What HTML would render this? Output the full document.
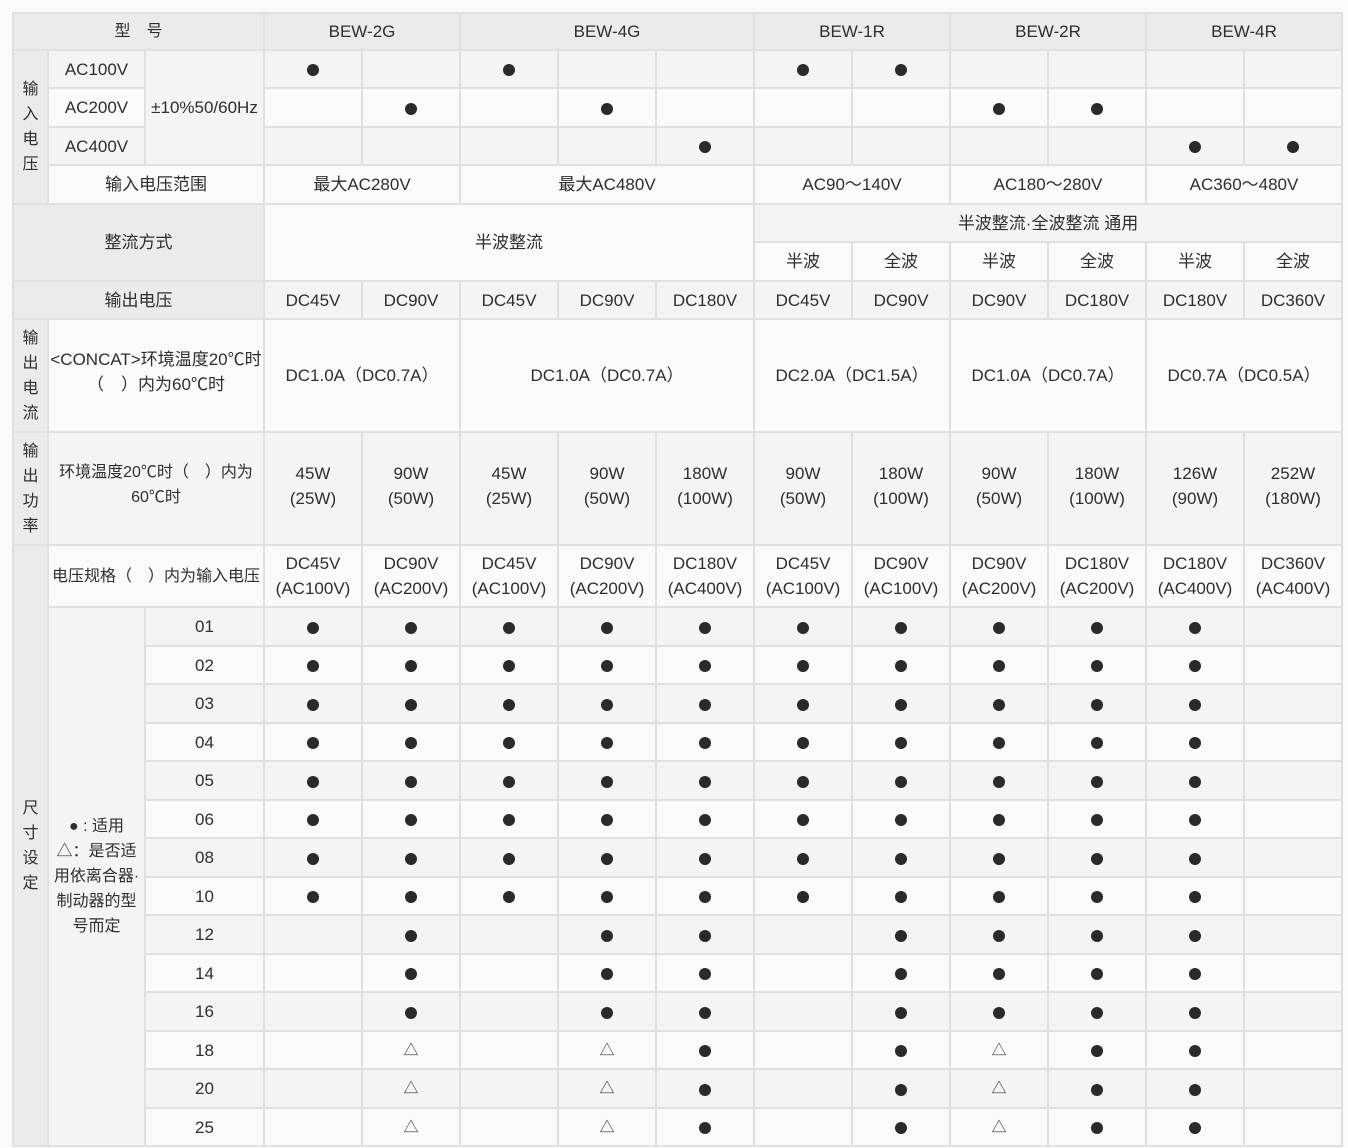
<!DOCTYPE html>
<html><head><meta charset="utf-8"><style>
html,body{margin:0;padding:0;background:#fafafa;}
body{width:1348px;height:1148px;overflow:hidden;position:relative;}
table{position:absolute;left:12px;top:12px;border-collapse:collapse;table-layout:fixed;width:1331px;
font-family:"Liberation Sans","Noto Sans CJK SC",sans-serif;font-size:17px;color:#2e2e2e;}
td{border:2px solid #e0e0e0;text-align:center;vertical-align:middle;padding:0;line-height:25px;overflow:hidden;white-space:nowrap;}
.h{background:#ebebeb;}
.g td{background:#f4f4f4;}
.g td.h,.w td.h{background:#ebebeb;}
.w td{background:#fafafa;}
.v{background:#ebebeb !important;line-height:25px;}
.d{display:inline-block;width:12px;height:12px;border-radius:50%;background:#2a2a2a;vertical-align:middle;}
.t{font-size:15px;}
.s{font-size:16px;}
.lab{background:#f4f4f4 !important;white-space:normal;font-size:16px;}
</style></head><body>
<table>
<colgroup><col style="width:35px"><col style="width:97px"><col style="width:119px">
<col style="width:98px"><col style="width:98px"><col style="width:98px"><col style="width:98px"><col style="width:98px"><col style="width:98px"><col style="width:98px"><col style="width:98px"><col style="width:98px"><col style="width:98px"><col style="width:98px"></colgroup>
<tr class="g" style="height:37px"><td class="h s" colspan="3">型　号</td><td class="h" colspan="2">BEW-2G</td><td class="h" colspan="3">BEW-4G</td><td class="h" colspan="2">BEW-1R</td><td class="h" colspan="2">BEW-2R</td><td class="h" colspan="2">BEW-4R</td></tr>
<tr class="g" style="height:38px"><td class="v s" rowspan="4">输<br>入<br>电<br>压</td><td>AC100V</td><td rowspan="3" style="background:#f4f4f4">±10%50/60Hz</td><td><span class="d"></span></td><td></td><td><span class="d"></span></td><td></td><td></td><td><span class="d"></span></td><td><span class="d"></span></td><td></td><td></td><td></td><td></td></tr>
<tr class="w" style="height:39px"><td>AC200V</td><td></td><td><span class="d"></span></td><td></td><td><span class="d"></span></td><td></td><td></td><td></td><td><span class="d"></span></td><td><span class="d"></span></td><td></td><td></td></tr>
<tr class="g" style="height:38px"><td>AC400V</td><td></td><td></td><td></td><td></td><td><span class="d"></span></td><td></td><td></td><td></td><td></td><td><span class="d"></span></td><td><span class="d"></span></td></tr>
<tr class="w" style="height:39px"><td colspan="2">输入电压范围</td><td colspan="2">最大AC280V</td><td colspan="3">最大AC480V</td><td colspan="2">AC90～140V</td><td colspan="2">AC180～280V</td><td colspan="2">AC360～480V</td></tr>
<tr class="g" style="height:38px"><td class="h" colspan="3" rowspan="2">整流方式</td><td colspan="5" rowspan="2" style="background:#fafafa">半波整流</td><td colspan="6">半波整流·全波整流 通用</td></tr>
<tr class="w" style="height:39px"><td>半波</td><td>全波</td><td>半波</td><td>全波</td><td>半波</td><td>全波</td></tr>
<tr class="g" style="height:38px"><td class="h" colspan="3">输出电压</td><td>DC45V</td><td>DC90V</td><td>DC45V</td><td>DC90V</td><td>DC180V</td><td>DC45V</td><td>DC90V</td><td>DC90V</td><td>DC180V</td><td>DC180V</td><td>DC360V</td></tr>
<tr class="w" style="height:113px"><td class="v s">输<br>出<br>电<br>流</td><td colspan="2" style="padding-bottom:8px">&lt;CONCAT&gt;环境温度20℃时<br>（　）内为60℃时</td><td colspan="2">DC1.0A（DC0.7A）</td><td colspan="3">DC1.0A（DC0.7A）</td><td colspan="2">DC2.0A（DC1.5A）</td><td colspan="2">DC1.0A（DC0.7A）</td><td colspan="2">DC0.7A（DC0.5A）</td></tr>
<tr class="g" style="height:113px"><td class="v s">输<br>出<br>功<br>率</td><td colspan="2" class="s" style="padding-bottom:8px">环境温度20℃时（　）内为<br>60℃时</td><td style="padding-bottom:6px">45W<br>(25W)</td><td style="padding-bottom:6px">90W<br>(50W)</td><td style="padding-bottom:6px">45W<br>(25W)</td><td style="padding-bottom:6px">90W<br>(50W)</td><td style="padding-bottom:6px">180W<br>(100W)</td><td style="padding-bottom:6px">90W<br>(50W)</td><td style="padding-bottom:6px">180W<br>(100W)</td><td style="padding-bottom:6px">90W<br>(50W)</td><td style="padding-bottom:6px">180W<br>(100W)</td><td style="padding-bottom:6px">126W<br>(90W)</td><td style="padding-bottom:6px">252W<br>(180W)</td></tr>
<tr class="w" style="height:62px"><td class="v s" rowspan="15">尺<br>寸<br>设<br>定</td><td colspan="2" class="s">电压规格（　）内为输入电压</td><td>DC45V<br>(AC100V)</td><td>DC90V<br>(AC200V)</td><td>DC45V<br>(AC100V)</td><td>DC90V<br>(AC200V)</td><td>DC180V<br>(AC400V)</td><td>DC45V<br>(AC100V)</td><td>DC90V<br>(AC100V)</td><td>DC90V<br>(AC200V)</td><td>DC180V<br>(AC200V)</td><td>DC180V<br>(AC400V)</td><td>DC360V<br>(AC400V)</td></tr>
<tr class="g" style="height:39px"><td class="lab" rowspan="14" style="padding-top:0px">● : 适用<br>△：是否适<br>用依离合器·<br>制动器的型<br>号而定</td><td>01</td><td><span class="d"></span></td><td><span class="d"></span></td><td><span class="d"></span></td><td><span class="d"></span></td><td><span class="d"></span></td><td><span class="d"></span></td><td><span class="d"></span></td><td><span class="d"></span></td><td><span class="d"></span></td><td><span class="d"></span></td><td></td></tr>
<tr class="w" style="height:38px"><td>02</td><td><span class="d"></span></td><td><span class="d"></span></td><td><span class="d"></span></td><td><span class="d"></span></td><td><span class="d"></span></td><td><span class="d"></span></td><td><span class="d"></span></td><td><span class="d"></span></td><td><span class="d"></span></td><td><span class="d"></span></td><td></td></tr>
<tr class="g" style="height:39px"><td>03</td><td><span class="d"></span></td><td><span class="d"></span></td><td><span class="d"></span></td><td><span class="d"></span></td><td><span class="d"></span></td><td><span class="d"></span></td><td><span class="d"></span></td><td><span class="d"></span></td><td><span class="d"></span></td><td><span class="d"></span></td><td></td></tr>
<tr class="w" style="height:38px"><td>04</td><td><span class="d"></span></td><td><span class="d"></span></td><td><span class="d"></span></td><td><span class="d"></span></td><td><span class="d"></span></td><td><span class="d"></span></td><td><span class="d"></span></td><td><span class="d"></span></td><td><span class="d"></span></td><td><span class="d"></span></td><td></td></tr>
<tr class="g" style="height:39px"><td>05</td><td><span class="d"></span></td><td><span class="d"></span></td><td><span class="d"></span></td><td><span class="d"></span></td><td><span class="d"></span></td><td><span class="d"></span></td><td><span class="d"></span></td><td><span class="d"></span></td><td><span class="d"></span></td><td><span class="d"></span></td><td></td></tr>
<tr class="w" style="height:38px"><td>06</td><td><span class="d"></span></td><td><span class="d"></span></td><td><span class="d"></span></td><td><span class="d"></span></td><td><span class="d"></span></td><td><span class="d"></span></td><td><span class="d"></span></td><td><span class="d"></span></td><td><span class="d"></span></td><td><span class="d"></span></td><td></td></tr>
<tr class="g" style="height:39px"><td>08</td><td><span class="d"></span></td><td><span class="d"></span></td><td><span class="d"></span></td><td><span class="d"></span></td><td><span class="d"></span></td><td><span class="d"></span></td><td><span class="d"></span></td><td><span class="d"></span></td><td><span class="d"></span></td><td><span class="d"></span></td><td></td></tr>
<tr class="w" style="height:38px"><td>10</td><td><span class="d"></span></td><td><span class="d"></span></td><td><span class="d"></span></td><td><span class="d"></span></td><td><span class="d"></span></td><td><span class="d"></span></td><td><span class="d"></span></td><td><span class="d"></span></td><td><span class="d"></span></td><td><span class="d"></span></td><td></td></tr>
<tr class="g" style="height:39px"><td>12</td><td></td><td><span class="d"></span></td><td></td><td><span class="d"></span></td><td><span class="d"></span></td><td></td><td><span class="d"></span></td><td><span class="d"></span></td><td><span class="d"></span></td><td><span class="d"></span></td><td></td></tr>
<tr class="w" style="height:38px"><td>14</td><td></td><td><span class="d"></span></td><td></td><td><span class="d"></span></td><td><span class="d"></span></td><td></td><td><span class="d"></span></td><td><span class="d"></span></td><td><span class="d"></span></td><td><span class="d"></span></td><td></td></tr>
<tr class="g" style="height:39px"><td>16</td><td></td><td><span class="d"></span></td><td></td><td><span class="d"></span></td><td><span class="d"></span></td><td></td><td><span class="d"></span></td><td><span class="d"></span></td><td><span class="d"></span></td><td><span class="d"></span></td><td></td></tr>
<tr class="w" style="height:38px"><td>18</td><td></td><td class="t">△</td><td></td><td class="t">△</td><td><span class="d"></span></td><td></td><td><span class="d"></span></td><td class="t">△</td><td><span class="d"></span></td><td><span class="d"></span></td><td></td></tr>
<tr class="g" style="height:39px"><td>20</td><td></td><td class="t">△</td><td></td><td class="t">△</td><td><span class="d"></span></td><td></td><td><span class="d"></span></td><td class="t">△</td><td><span class="d"></span></td><td><span class="d"></span></td><td></td></tr>
<tr class="w" style="height:38px"><td>25</td><td></td><td class="t">△</td><td></td><td class="t">△</td><td><span class="d"></span></td><td></td><td><span class="d"></span></td><td class="t">△</td><td><span class="d"></span></td><td><span class="d"></span></td><td></td></tr>
</table>
</body></html>
